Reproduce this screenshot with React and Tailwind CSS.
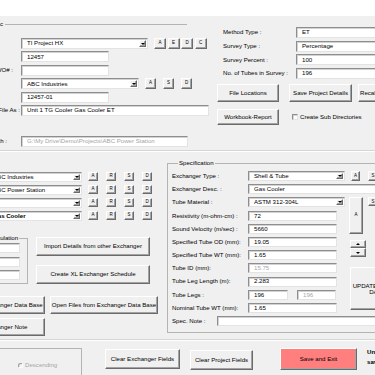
import clsx from 'clsx'

const sunken = 'bg-white border border-t-[#8e8e8e] border-l-[#8e8e8e] border-r-[#e3e3e3] border-b-[#e3e3e3] shadow-[inset_1px_1px_0_#d2d2d2]'
const raised = 'bg-[#f0f0f0] border border-t-white border-l-white border-r-[#6b6b6b] border-b-[#6b6b6b] shadow-[inset_-1px_-1px_0_#a3a3a3]'

const Box = ({ className, grey, children }) => (
  <div className={clsx(sunken, 'flex shrink-0 items-center overflow-hidden whitespace-nowrap pl-[5px]', grey && 'text-[#a6a6a6]', className)}>
    {children}
  </div>
)

const Combo = ({ className, bold, children }) => (
  <div className={clsx(sunken, 'flex shrink-0 items-center overflow-hidden whitespace-nowrap pl-[5px] pr-px', bold && 'font-bold', className)}>
    <span className="flex-1">{children}</span>
    <span className={clsx(raised, 'my-px flex w-[7px] shrink-0 items-center justify-center self-stretch')}>
      <span className="border-x-[2px] border-t-[2.5px] border-x-transparent border-t-black" />
    </span>
  </div>
)

const Btn = ({ className, children }) => (
  <button type="button" className={clsx(raised, 'flex shrink-0 items-center justify-center whitespace-nowrap leading-none', className)}>
    {children}
  </button>
)

const Mini = ({ className, children }) => <Btn className={clsx('text-[4.5px]', className)}>{children}</Btn>

const Label = ({ className, children }) => (
  <div className={clsx('flex shrink-0 items-center justify-end whitespace-nowrap', className)}>{children}</div>
)

const survey = [
  ['Method Type :', 'ET'],
  ['Survey Type :', 'Percentage'],
  ['Survey Percent :', '100'],
  ['No. of Tubes in Survey :', '196'],
]

const lists = [
  { text: 'ABC Industries' },
  { text: 'ABC Power Station' },
  { text: '' },
  { text: 'Gas Cooler', bold: true },
]

const Spin = () => (
  <div className="flex h-[17px] w-[16px] flex-col">
    <Btn className="h-1/2 w-full">
      <span className="border-x-[2.5px] border-b-[2.5px] border-x-transparent border-b-black" />
    </Btn>
    <Btn className="h-1/2 w-full">
      <span className="border-x-[2.5px] border-t-[2.5px] border-x-transparent border-t-black" />
    </Btn>
  </div>
)

export default function App() {
  return (
    <div className="h-[375px] w-[375px] overflow-hidden bg-[#f0f0f0] font-['Liberation_Sans',Arial,sans-serif] text-[6.1px] leading-none text-black">
      <div className="h-[16px] bg-white" />

      {/* project details */}
      <div className="flex h-[134px]">
        <div className="flex w-[217px] shrink-0 flex-col">
          <div className="mt-[4px] flex h-[8px] items-center">
            <span>c</span>
            <div className="ml-[2px] w-[182px] border-t border-[#b4b4b4]" />
          </div>

          <div className="mt-[10px] flex flex-col gap-[2.4px]">
            <div className="flex h-[11px]">
              <div className="w-[21px] shrink-0" />
              <Combo className="w-[127px]">TI Project HX</Combo>
              <div className="ml-[6px] flex gap-[1.5px]">
                {['A', 'E', 'D', 'C'].map(l => (
                  <Mini key={l} className="h-[11px] w-[12px]">{l}</Mini>
                ))}
              </div>
            </div>
            <div className="flex h-[11px]">
              <div className="w-[21px] shrink-0" />
              <Box className="w-[88px]">12457</Box>
            </div>
            <div className="flex h-[11px]">
              <Label className="w-[21px] pr-[8px]">WO# :</Label>
              <Box className="w-[88px]" />
            </div>
            <div className="flex h-[11px]">
              <div className="w-[21px] shrink-0" />
              <Combo className="w-[118px]">ABC Industries</Combo>
              <div className="ml-[6px] flex gap-[7px]">
                {['A', 'S', 'D'].map(l => (
                  <Mini key={l} className="h-[11px] w-[11px]">{l}</Mini>
                ))}
              </div>
            </div>
            <div className="flex h-[11px]">
              <div className="w-[21px] shrink-0" />
              <Box className="w-[88px]">12457-01</Box>
            </div>
            <div className="flex h-[11px]">
              <Label className="w-[21px] pr-px">File As :</Label>
              <Box className="w-[188px]">Unit 1 TG Cooler Gas Cooler ET</Box>
            </div>
          </div>

          <div className="mt-[20px] flex h-[11px]">
            <Label className="w-[21px] pr-[14px]">Path :</Label>
            <Box grey className="w-[167px]">G:\My Drive\Demo\Projects\ABC Power Station</Box>
          </div>
        </div>

        <div className="flex flex-1 flex-col pt-[11px]">
          <div className="flex flex-col gap-[2.6px]">
            {survey.map(([label, value]) => (
              <div key={label} className="flex h-[11px]">
                <div className="flex w-[79px] shrink-0 items-center pl-[6px] whitespace-nowrap">{label}</div>
                <Box className="w-[100px]">{value}</Box>
              </div>
            ))}
          </div>
          <div className="mt-[5px] flex h-[18px]">
            <Btn className="w-[62px]">File Locations</Btn>
            <Btn className="ml-[10px] w-[63px] border-[#3a3a3a]">Save Project Details</Btn>
            <Btn className="ml-[6px] w-[62px]">Recall Project Details</Btn>
          </div>
          <div className="mt-[7px] flex items-center">
            <Btn className="h-[16px] w-[62px]">Workbook-Report</Btn>
            <span className={clsx(sunken, 'ml-[13px] size-[6px]')} />
            <span className="ml-[2px] whitespace-nowrap">Create Sub Directories</span>
          </div>
        </div>
      </div>

      <div className="h-px bg-[#d5d5d5]" />
      <div className="h-px bg-white" />

      {/* exchanger */}
      <div className="flex h-[187px]">
        <div className="flex w-[167px] shrink-0 flex-col pt-[20px]">
          <div className="flex flex-col gap-[3px]">
            {lists.map((row, i) => (
              <div key={i} className="flex h-[10px]">
                <Combo bold={row.bold} className="ml-[-13px] w-[95px]">{row.text}</Combo>
                <div className="ml-[6px] flex gap-[8px]">
                  {['A', 'R', 'S', 'D'].map(l => (
                    <Mini key={l} className="h-[9px] w-[10px]">{l}</Mini>
                  ))}
                </div>
              </div>
            ))}
          </div>

          <div className="mt-[13px] flex items-start">
            <fieldset className="ml-[-40px] h-[50px] w-[68px] min-w-0 shrink-0 border border-[#b4b4b4]">
              <legend className="ml-[26px] px-px leading-[8px]">Calculation</legend>
              <div className="mt-px flex flex-col items-end gap-[3.5px] pr-[7px]">
                <Box className="h-[10px] w-[40px]" />
                <Box className="h-[10px] w-[40px]" />
                <Box className="h-[10px] w-[40px]" />
              </div>
            </fieldset>
            <div className="ml-[8px] mt-[3px] flex flex-col gap-[9px]">
              <Btn className="h-[19px] w-[114px]">Import Details from other Exchanger</Btn>
              <Btn className="h-[19px] w-[114px]">Create XL Exchanger Schedule</Btn>
            </div>
          </div>

          <div className="mt-[12px] flex">
            <Btn className="ml-[-19px] h-[18px] w-[64px]">Exchanger Data Base</Btn>
            <Btn className="ml-[5px] h-[18px] w-[108px]">Open Files from Exchanger Data Base</Btn>
          </div>
          <div className="mt-[4px] flex">
            <Btn className="ml-[-34px] h-[18px] w-[79px]">Exchanger Note</Btn>
          </div>
        </div>

        <fieldset className="mt-[7px] h-[174px] w-[233px] min-w-0 shrink-0 border border-[#b4b4b4] pl-[4px]">
          <legend className="ml-[6px] px-px leading-[8px]">Specification</legend>
          <div className="mt-[4px] grid auto-rows-[10px] grid-cols-[76px_97px_21px_auto] gap-y-[3.2px]">
            <div className="flex items-center">Exchanger Type :</div>
            <Combo className="w-[97px]">Shell &amp; Tube</Combo>
            <div className="flex"><Mini className="ml-[6px] h-[10px] w-[9px]">A</Mini></div>
            <div className="flex"><Mini className="ml-[2px] h-[10px] w-[10px]">S</Mini></div>

            <div className="flex items-center">Exchanger Desc. :</div>
            <Box className="col-span-3">Gas Cooler</Box>

            <div className="flex items-center">Tube Material :</div>
            <Combo className="w-[97px]">ASTM 312-304L</Combo>
            <div className="row-span-3 flex"><Mini className="ml-[4px] h-full w-[14px]">A</Mini></div>
            <div className="flex"><Mini className="ml-[2px] h-[9px] w-[10px]">S</Mini></div>

            <div className="col-start-1 flex items-center whitespace-nowrap">Resistivity (m-ohm-cm) :</div>
            <Box className="w-[89px]">72</Box>

            <div className="col-start-1 flex items-center whitespace-nowrap">Sound Velocity (m/sec) :</div>
            <Box className="w-[89px]">5660</Box>

            <div className="col-start-1 flex items-center whitespace-nowrap">Specified Tube OD (mm):</div>
            <Box className="w-[89px]">19.05</Box>
            <div className="row-span-2 flex items-start pl-[5px] pt-[3px]"><Spin /></div>

            <div className="col-start-1 flex items-center whitespace-nowrap">Specified Tube WT (mm):</div>
            <Box className="w-[89px]">1.65</Box>

            <div className="col-start-1 flex items-center">Tube ID (mm):</div>
            <Box grey className="w-[89px]">15.75</Box>
            <div className="col-span-2 row-span-4 flex items-start pl-[5px] pt-[4px]">
              <Btn className="h-[43px] w-[70px] flex-col gap-0 leading-[8px]">
                <span>UPDATE EXCHANGER</span>
                <span>DATABASE</span>
              </Btn>
            </div>

            <div className="col-start-1 flex items-center whitespace-nowrap">Tube Leg Length (m):</div>
            <Box className="w-[89px]">2.283</Box>

            <div className="col-start-1 flex items-center">Tube Legs :</div>
            <div className="flex">
              <Box className="w-[40px]">196</Box>
              <Box grey className="ml-[9px] w-[39px]">196</Box>
            </div>

            <div className="col-start-1 flex items-center whitespace-nowrap">Nominal Tube WT (mm):</div>
            <Box className="w-[89px]">1.65</Box>
          </div>
          <div className="mt-[3.2px] flex h-[10px]">
            <div className="flex w-[45px] shrink-0 items-center">Spec. Note :</div>
            <Box className="w-[176px]" />
          </div>
        </fieldset>
      </div>

      <div className="h-px bg-[#d5d5d5]" />
      <div className="h-px bg-white" />

      {/* actions */}
      <div className="flex items-start">
        <fieldset className="ml-[-60px] mt-[7px] h-[40px] w-[142px] min-w-0 shrink-0 border border-[#b4b4b4] pl-[77px] pt-[13px]">
          <div className="flex h-[6px] items-center text-[#a6a6a6]">
            <span className="size-[5px] rounded-full border border-t-[#9a9a9a] border-l-[#9a9a9a] border-r-white border-b-white" />
            <span className="ml-[2px]">Descending</span>
          </div>
        </fieldset>
        <Btn className="ml-[23px] mt-[8px] h-[20px] w-[75px]">Clear Exchanger Fields</Btn>
        <Btn className="ml-[10px] mt-[9px] h-[20px] w-[63px]">Clear Project Fields</Btn>
        <Btn className="ml-[27px] mt-[7px] h-[22px] w-[77px] bg-[#ff7f7f]">Save and Exit</Btn>
        <div className="ml-[10px] mt-[6px] whitespace-nowrap font-bold leading-[10px]">
          <div>Unsaved</div>
          <div>saved</div>
        </div>
      </div>
    </div>
  )
}
